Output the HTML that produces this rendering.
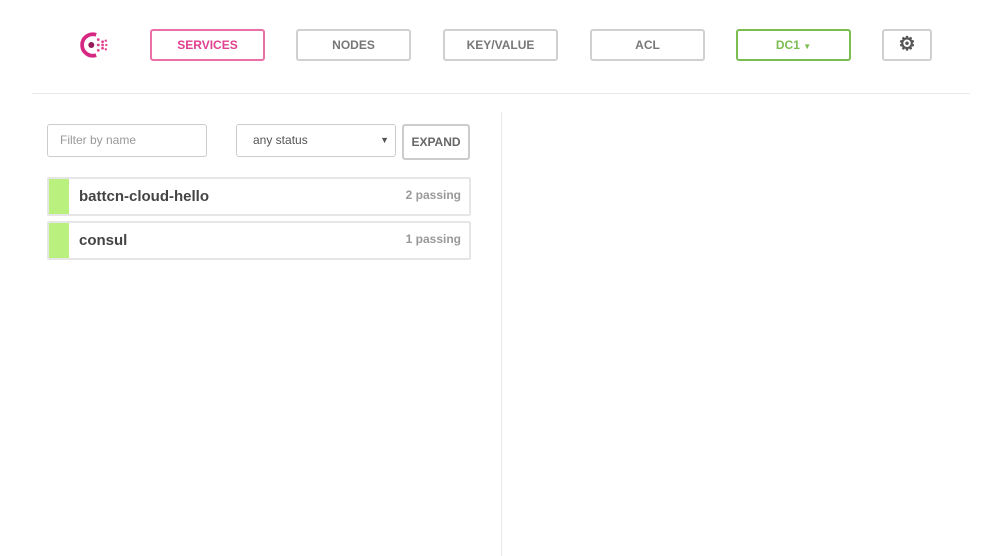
<!DOCTYPE html>
<html><head><style>
body{margin:0;width:1000px;height:556px;background:#fff;font-family:"Liberation Sans",sans-serif;position:relative;overflow:hidden}
.b{position:absolute;top:29px;height:28px;width:111px;border:2px solid #d0d0d0;border-radius:3px;text-align:center;line-height:28px;font-size:12px;font-weight:bold;color:#777;box-sizing:content-box}
.hr{position:absolute;left:32px;top:93px;width:938px;height:1px;background:#e8e8e8}
.vr{position:absolute;left:501px;top:112px;width:1px;height:444px;background:#e8e8e8}
.in{position:absolute;top:124px;height:31px;border:1px solid #ccc;border-radius:3px;font-size:12px;line-height:31px;box-sizing:content-box}
.row{position:absolute;left:47px;width:420px;height:35px;border:2px solid #e6e6e6;border-radius:2px}
.row .g{position:absolute;left:0;top:0;width:20px;height:35px;background:#b9f07e}
.row .n{position:absolute;left:30px;top:0;line-height:35px;font-size:15px;font-weight:bold;color:#444}
.row .p{position:absolute;right:8px;top:0;line-height:33px;font-size:12px;font-weight:bold;color:#999}
</style></head><body>
<svg style="position:absolute;left:77px;top:30px" width="34" height="30" viewBox="0 0 30 28">
<path d="M17 4.5 A10 10 0 1 0 17 23.5" fill="none" stroke="#d62783" stroke-width="3.5"/>
<circle cx="12.5" cy="14" r="2.8" fill="#961d59"/>
<g fill="#e0408f"><circle cx="19" cy="9" r="1.3"/><circle cx="23" cy="11" r="1.3"/><circle cx="19" cy="14" r="1.3"/><circle cx="23" cy="14" r="1.3"/><circle cx="26.5" cy="14" r="1.1"/><circle cx="19" cy="19" r="1.3"/><circle cx="23" cy="17" r="1.3"/><circle cx="26" cy="10" r="1.1"/><circle cx="26" cy="18" r="1.1"/></g>
</svg>
<div class="b" style="left:150px;border-color:#ec70a8;color:#e0408f">SERVICES</div>
<div class="b" style="left:296px">NODES</div>
<div class="b" style="left:443px">KEY/VALUE</div>
<div class="b" style="left:590px">ACL</div>
<div class="b" style="left:736px;border-color:#7cbd52;color:#7cbd52">DC1 <span style="font-size:8px">&#9660;</span></div>
<div class="b" style="left:882px;width:46px;color:#555;font-size:19px">&#9881;</div>
<div class="hr"></div><div class="vr"></div>
<div class="in" style="left:47px;width:146px;padding-left:12px;color:#999">Filter by name</div>
<div class="in" style="left:236px;width:142px;padding-left:16px;color:#555">any status<span style="position:absolute;right:6px;font-size:9px">&#9660;</span></div>
<div class="in" style="left:402px;width:64px;height:32px;line-height:32px;border:2px solid #ccc;text-align:center;font-weight:bold;color:#666">EXPAND</div>
<div class="row" style="top:177px"><div class="g"></div><div class="n">battcn-cloud-hello</div><div class="p">2 passing</div></div>
<div class="row" style="top:221px"><div class="g"></div><div class="n">consul</div><div class="p">1 passing</div></div>
</body></html>
